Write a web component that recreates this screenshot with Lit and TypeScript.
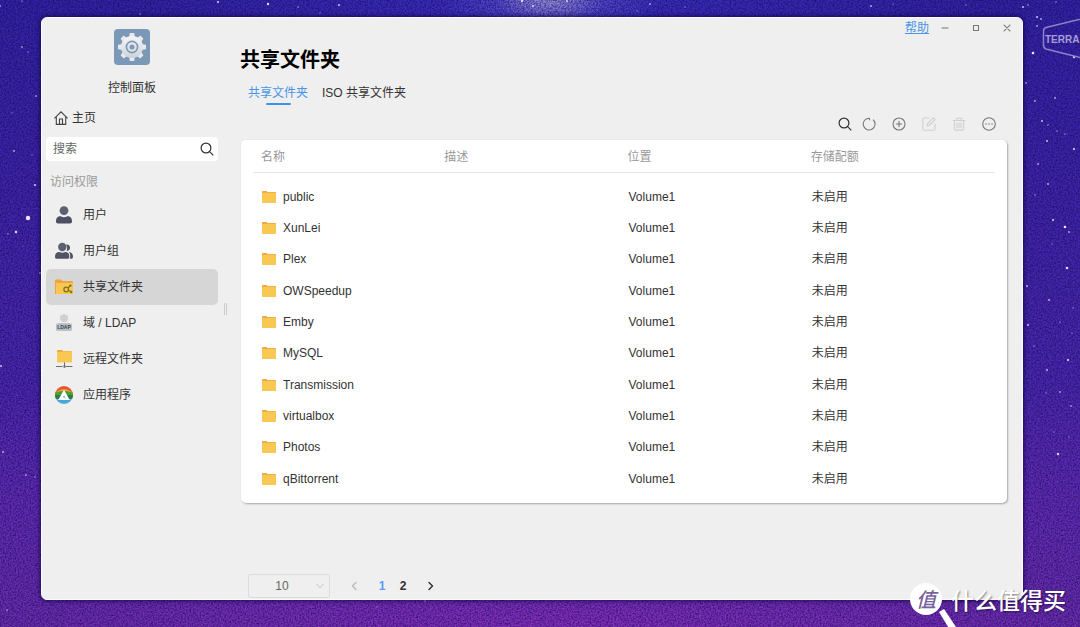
import { LitElement, html, css, svg, nothing } from "lit";
import { customElement, property, state } from "lit/decorators.js";
import { classMap } from "lit/directives/class-map.js";

const FONT = css`"Liberation Sans", "Noto Sans CJK SC", sans-serif`;

/* Star positions: x, y, radius, opacity */
const STARS: number[][] = [
  [28, 218, 2.2, 1], [16, 232, 1.3, 0.9], [35, 185, 1, 0.9], [14, 151, 0.9, 0.7], [22, 47, 0.9, 0.6],
  [28, 52, 0.8, 0.5], [36, 96, 1, 0.6], [12, 113, 0.7, 0.5], [32, 155, 0.7, 0.5], [8, 234, 0.8, 0.5],
  [40, 273, 1, 0.7], [1, 366, 1, 0.8], [3, 452, 1, 0.7], [26, 475, 0.9, 0.6], [35, 477, 0.8, 0.5],
  [7, 610, 0.9, 0.5], [17, 395, 0.6, 0.4], [23, 246, 0.7, 0.4], [22, 1, 0.8, 0.5], [0, 6, 0.9, 0.7],
  [140, 14, 0.8, 0.6], [218, 2, 1, 0.9], [268, 4, 1.2, 0.9], [298, 7, 0.8, 0.6], [339, 5, 1, 0.8],
  [320, 13, 0.8, 0.4], [522, 1, 1.2, 0.9], [533, 6, 1, 0.9], [567, 1, 1, 0.8], [650, 4, 0.9, 0.7],
  [637, 11, 0.8, 0.5], [685, 7, 0.8, 0.5], [871, 6, 1, 0.7], [893, 4, 0.7, 0.5], [966, 5, 0.8, 0.5],
  [1023, 7, 1, 0.8], [1028, 5, 0.8, 0.7], [1037, 17, 1.1, 0.8], [1041, 19, 0.9, 0.7], [1037, 26, 0.9, 0.7],
  [1033, 53, 1.3, 1], [1074, 57, 1.2, 0.9], [1056, 2, 0.8, 0.6], [1026, 83, 0.9, 0.7], [1035, 101, 0.9, 0.7],
  [1055, 98, 0.9, 0.7], [1042, 121, 1, 0.8], [1048, 125, 0.8, 0.6], [1047, 141, 1, 0.8], [1057, 131, 0.8, 0.6],
  [1065, 134, 0.8, 0.6], [1074, 149, 1.1, 0.9], [1038, 164, 0.9, 0.7], [1048, 184, 1, 0.7], [1035, 195, 0.8, 0.6],
  [1053, 220, 1, 0.9], [1065, 227, 1.3, 1], [1069, 232, 0.9, 0.7], [1052, 244, 0.7, 0.5], [1067, 268, 1.2, 1],
  [1027, 286, 1, 0.8], [1049, 300, 1, 0.7], [1028, 325, 1, 0.8], [1060, 322, 0.8, 0.5], [1034, 346, 0.8, 0.5],
  [1068, 360, 1.1, 0.9], [1047, 370, 1, 0.7], [1060, 392, 0.9, 0.7], [1046, 393, 0.7, 0.5], [1071, 406, 0.9, 0.6],
  [1054, 432, 0.8, 0.5], [1058, 454, 1.2, 0.9], [1069, 437, 0.7, 0.5], [1073, 308, 0.8, 0.5], [1072, 333, 0.8, 0.5],
  [425, 601, 0.8, 0.8], [377, 607, 0.8, 0.4], [700, 616, 0.8, 0.4],
];

const folder = svg`
  <svg width="14" height="12" viewBox="0 0 14 12" aria-hidden="true">
    <path d="M0 1a1 1 0 0 1 1-1h3.4l1.2 1.1H13a1 1 0 0 1 1 1V6H0z" fill="#efa53f"/>
    <rect y="1.8" width="14" height="10.2" rx="0.8" fill="#f9c852"/>
  </svg>`;

const search = svg`
  <svg width="14" height="14" viewBox="0 0 14 14" fill="none" stroke="#333" stroke-width="1.2" aria-hidden="true">
    <circle cx="6" cy="6" r="4.9"/><path d="M9.6 9.6l3.7 3.7"/>
  </svg>`;

const line = (body: unknown, color = "#777") => svg`
  <svg width="14" height="14" viewBox="0 0 14 14" fill="none" stroke=${color} stroke-width="1.1" stroke-linecap="round" stroke-linejoin="round" aria-hidden="true">${body}</svg>`;

const icons = {
  user: svg`<svg width="18" height="18" viewBox="0 0 18 18" fill="#5b6072" aria-hidden="true">
    <circle cx="9" cy="4.6" r="4.4"/><path fill="#4b5062" d="M1 15.6c0-3.8 1.6-5.4 4.6-5.4 1 .7 2.2 1 3.4 1s2.4-.3 3.4-1c3 0 4.6 1.6 4.6 5.4 0 1.3-.7 2-2 2H3c-1.3 0-2-.7-2-2z"/></svg>`,
  group: svg`<svg width="18" height="18" viewBox="0 0 18 18" fill="#4f5465" aria-hidden="true">
    <path d="M11 2.5a3.3 3.3 0 1 1 .5 6.5c1-1.6 1-4-.5-6.500z"/><path d="M14 10c2.800.4 4 2.200 4 4.800 0 1.300-.5 2-1.600 2h-1.600c.7-2 .4-5-.8-6.800z"/>
    <circle cx="7.3" cy="5" r="4.2" fill="#5b6072"/><path d="M0 15c0-3.400 1.400-5 4.300-5 1.900 1 4.100 1 6 0 2.900 0 4 1.600 4 5 0 1.200-.6 1.800-1.800 1.800H1.800C.6 16.800 0 16.200 0 15z"/></svg>`,
  share: svg`<svg width="18" height="18" viewBox="0 0 18 18" aria-hidden="true">
    <path d="M0 3a1.4 1.4 0 0 1 1.4-1.4h4.4L7.6 3h9A1.4 1.4 0 0 1 18 4.4V16H0z" fill="#f1a33c"/>
    <path d="M1 5h16.500l.5.6v9.800l-.6.6H1z" fill="#f9c650"/>
    <g fill="none" stroke="#7d7420" stroke-width="1.3"><circle cx="11.2" cy="11.5" r="2.3"/><path d="M13 10l2-2M13.500 12.300l2.300 1.500"/></g>
    <g fill="#7d7420"><circle cx="15.4" cy="7.6" r="1.2"/><circle cx="16.2" cy="14" r="1.2"/></g></svg>`,
  ldap: svg`<svg width="18" height="18" viewBox="0 0 18 18" aria-hidden="true">
    <circle cx="9" cy="4.3" r="4" fill="#cdd2d6"/><path d="M1 11c0-1.200 1.400-2 3.500-2h9c2.100 0 3.500.8 3.500 2v4.500c0 .9-.6 1.500-1.500 1.500h-13c-.9 0-1.500-.6-1.500-1.500z" fill="#b9c2c8"/>
    <text x="9" y="14.6" font-family="Liberation Sans" font-weight="700" font-size="5" text-anchor="middle" fill="#3c444b">LDAP</text></svg>`,
  remote: svg`<svg width="18" height="18" viewBox="0 0 18 18" aria-hidden="true">
    <path d="M2 1a1 1 0 0 1 1-1h4l1.200 1.200H16a1 1 0 0 1 1 1V6H2z" fill="#f1a33c"/><rect x="2" y="1.8" width="15" height="10.600" rx=".6" fill="#f9c852"/>
    <path d="M9.500 12.400V16M1 16.500h6.500M11 16.500h6.500" stroke="#6d6d6d" fill="none"/><path d="M8.500 15.200h2v2.600h-2z" fill="#6d6d6d"/></svg>`,
  apps: svg`<svg width="18" height="18" viewBox="0 0 18 18" aria-hidden="true">
    <clipPath id="disc"><circle cx="9" cy="9" r="9"/></clipPath>
    <g clip-path="url(#disc)"><path d="M0 0h18v7H0z" fill="#e4572e"/><path d="M0 7Q9-1 18 7v3H0z" fill="#f39a2e"/><path d="M0 6.500Q9 3.500 18 6.500V13H0z" fill="#4a9f3a"/><path d="M0 9h18v4H0z" fill="#2b7d46"/><path d="M0 12.500q9 3 18 0V18H0z" fill="#4ba6d8"/></g>
    <path d="M3.400 13.800L9 3.800l5.600 10h-3.400L9 9.600l-.9 1.600h1.500l1.400 2.600z" fill="#fff"/></svg>`,
};

@customElement("space-backdrop")
export class SpaceBackdrop extends LitElement {
  static styles = css`
    :host { position: absolute; inset: 0; overflow: hidden; background:
      radial-gradient(ellipse 110px 44px at 550px 0, rgba(165, 160, 225, .9), rgba(100, 90, 215, .5) 50%, transparent),
      radial-gradient(ellipse 420px 90px at 550px 0, rgba(70, 60, 225, .5), transparent),
      radial-gradient(ellipse 560px 90px at 560px 627px, rgba(160, 50, 205, .5), transparent),
      linear-gradient(#3423a8, #4125ad 30%, #4c28b2 60%, #642cb6 80%, #6c2dae); }
    .layer { position: absolute; inset: 0; width: 100%; height: 100%; }
    .brand { position: absolute; left: 1042px; top: 16px; }
  `;
  render() {
    return html`
      <svg class="layer" aria-hidden="true">
        <filter id="grain" x="0" y="0" width="100%" height="100%" color-interpolation-filters="sRGB">
          <feTurbulence type="fractalNoise" baseFrequency="0.6" numOctaves="2" seed="4"/>
          <feColorMatrix values="0 0 0 0 0.06  0 0 0 0 0.03  0 0 0 0 0.3  1.3 0 0 0 -0.42"/>
        </filter>
        <rect width="100%" height="100%" filter="url(#grain)"/>
        ${STARS.map(([x, y, r, o]) => svg`<circle cx=${x} cy=${y} r=${r} fill="#f3e4ff" opacity=${o}/>`)}
      </svg>
      <svg class="brand" width="38" height="46" viewBox="0 0 38 46" aria-hidden="true">
        <path d="M60 -2L4 11.5Q1.5 12.5 1.5 15V29Q1.5 32 4 33L60 47" fill="none" stroke="#8d82c8" stroke-width="1.5"/>
        <text x="3" y="27" font-family="Liberation Sans, sans-serif" font-weight="700" font-size="10" fill="#a79dd6">TERRA</text>
      </svg>`;
  }
}

@customElement("side-nav")
export class SideNav extends LitElement {
  @state() private active = "共享文件夹";
  private items: [string, unknown][] = [
    ["用户", icons.user], ["用户组", icons.group], ["共享文件夹", icons.share],
    ["域 / LDAP", icons.ldap], ["远程文件夹", icons.remote], ["应用程序", icons.apps],
  ];
  static styles = css`
    :host { display: flex; flex-direction: column; width: 172px; flex: none; padding: 11px 0 0 4px; font: 12px/16px ${FONT}; color: #333; }
    svg { display: block; flex: none; }
    button, input { font: inherit; color: inherit; border: 0; background: none; padding: 0; margin: 0; outline: none; }
    .app { display: flex; flex-direction: column; align-items: center; gap: 15px; }
    .home { display: flex; align-items: center; gap: 4px; height: 20px; padding: 0 8px; margin-top: 12px; color: inherit; text-decoration: none; }
    .search { display: flex; align-items: center; height: 24px; margin-top: 9px; padding: 0 4px 0 7px; background: #fff; border-radius: 4px; }
    .search input { flex: 1; min-width: 0; }
    .search input::placeholder { color: #666; opacity: 1; }
    h2 { margin: 13px 0 7px 4px; font-size: 12px; font-weight: 400; color: #999; }
    nav { display: flex; flex-direction: column; }
    .item { display: flex; align-items: center; gap: 10px; height: 36px; padding: 0 9px; border-radius: 5px; text-align: left; cursor: pointer; }
    .item.active { background: #d6d6d6; }
  `;
  render() {
    return html`
      <div class="app">
        <svg width="36" height="36" viewBox="0 0 36 36" aria-hidden="true">
          <defs><linearGradient id="metal" x1="0" y1="0" x2="0" y2="1"><stop offset="0" stop-color="#f4f5f7"/><stop offset="1" stop-color="#cfd3d9"/></linearGradient></defs>
          <rect width="36" height="36" rx="4" fill="#7b99b6"/>
          <g fill="#e6e8ec">
          ${[0, 45, 90, 135, 180, 225, 270, 315].map((a) => svg`<path d="M15 9L15.800 4h4.400l.8 5z" transform="rotate(${a} 18 18)"/>`)}<circle cx="18" cy="18" r="11" fill="url(#metal)"/></g>
          <circle cx="18" cy="18" r="5.600" fill="none" stroke="#7b99b6" stroke-width="1.600"/><circle cx="18" cy="18" r="2.500" fill="#7b99b6"/>
        </svg>
        <span>控制面板</span>
      </div>
      <a class="home" href="#">
        <svg width="14" height="14" viewBox="0 0 14 14" fill="none" stroke="#444" stroke-width="1.1" aria-hidden="true"><path d="M.4 7.300L7 .8l6.600 6.500M2.300 6v7.400h9.400V6M5.500 13.400V8h3v5.400"/></svg>
        <span>主页</span>
      </a>
      <label class="search"><input type="text" placeholder="搜索" aria-label="搜索" />${search}</label>
      <h2>访问权限</h2>
      <nav>
        ${this.items.map(([name, icon]) => html`
          <button class=${classMap({ item: true, active: name === this.active })} @click=${() => (this.active = name)}>${icon}<span>${name}</span></button>`)}
      </nav>`;
  }
}

@customElement("folder-table")
export class FolderTable extends LitElement {
  @property({ type: Array }) rows: string[] = [];
  static styles = css`
    :host { display: block; box-sizing: border-box; padding: 0 12px; min-height: 363px; background: #fff; border-radius: 5px; box-shadow: 1px 1px 2px rgba(0, 0, 0, .3); font: 12px/16px ${FONT}; color: #333; }
    table { width: 100%; border-collapse: separate; border-spacing: 0; table-layout: fixed; }
    th { box-sizing: border-box; width: 24.7%; height: 33px; padding: 1px 0 0 8px; border-bottom: 1px solid #e4e4e4; text-align: left; font-weight: 400; color: #999; }
    th:last-child { width: auto; }
    tbody::before { content: ""; display: block; height: 8px; }
    td { height: 31px; padding: 0 0 0 9px; }
    tr:nth-child(3n) td { height: 32px; }
    .name { display: flex; align-items: center; gap: 7px; }
    svg { display: block; }
  `;
  render() {
    return html`<table>
      <thead><tr><th>名称</th><th>描述</th><th>位置</th><th>存储配额</th></tr></thead>
      <tbody>${this.rows.map((r) => html`
        <tr><td><span class="name">${folder}${r}</span></td><td>${nothing}</td><td>Volume1</td><td>未启用</td></tr>`)}
      </tbody></table>`;
  }
}

@customElement("app-root")
export class AppRoot extends LitElement {
  @state() private tab = 0;
  @state() private page = 1;
  private folders = ["public", "XunLei", "Plex", "OWSpeedup", "Emby", "MySQL", "Transmission", "virtualbox", "Photos", "qBittorrent"];
  static styles = css`
    :host { display: flex; box-sizing: border-box; position: relative; min-height: 100vh; padding: 17px 57px 27px 41px; overflow: hidden; font: 12px/16px ${FONT}; color: #333; }
    svg { display: block; }
    button, select { font: inherit; color: inherit; border: 0; background: none; padding: 0; margin: 0; cursor: pointer; }
    .window { position: relative; flex: 1; min-width: 0; display: flex; background: #efefef; border: 1px solid #fbfbfb; border-radius: 6px; box-shadow: 0 0 4px 1px rgba(15, 5, 70, .8); }
    .splitter { width: 3px; height: 12px; margin: 0 0 0 6px; align-self: center; border: solid #ccc; border-width: 0 1px; box-sizing: border-box; }
    main { flex: 1; min-width: 0; display: flex; flex-direction: column; padding: 0 15px 1px 14px; }
    .titlebar { display: flex; justify-content: flex-end; align-items: center; height: 20px; margin-right: -8px; gap: 15px; }
    .titlebar button { width: 16px; height: 16px; display: grid; place-items: center; }
    .help { color: #4a94e8; margin-right: -7px; }
    h1 { margin: 8px 0 0 -1px; font-size: 20px; line-height: 28px; font-weight: 700; color: #000; }
    .tabs { display: flex; gap: 14px; margin: 9px 0 0 7px; }
    .tab { display: flex; flex-direction: column; align-items: center; line-height: 20px; }
    .tab::after { content: ""; width: 25px; height: 2px; border-radius: 1px; }
    .tab.on { color: #4a94e8; }
    .tab.on::after { background: #3d93ea; }
    .tools { display: flex; justify-content: flex-end; gap: 8px; margin: 11px 10px 8px 0; }
    .actions { display: flex; gap: 14px; }
    .tools button { width: 16px; height: 16px; display: grid; place-items: center; }
    .pager { display: flex; align-items: center; gap: 8px; margin: auto 0 0 7px; color: #333; }
    .size { display: grid; align-items: center; margin-right: 6px; }
    .size > * { grid-area: 1 / 1; }
    .size svg { justify-self: end; margin-right: 6px; pointer-events: none; }
    .size select { appearance: none; width: 82px; height: 24px; border: 1px solid #dcdde2; border-radius: 2px; padding: 0 26px 0 12px; text-align-last: center; color: #666; outline: none; }
    .pager button { width: 20px; height: 20px; display: grid; place-items: center; font-weight: 700; }
    .pages { display: flex; gap: 1px; }
    .pages .on { color: #5a9cf8; }
    .mark { position: absolute; right: 14px; bottom: 0; height: 44px; display: flex; gap: 9px; pointer-events: none; color: #fff; font: 500 23px/32px "Noto Sans CJK SC", sans-serif; text-shadow: 1px 1px 2px rgba(0, 0, 0, .45); white-space: nowrap; }
    .seal { width: 32px; height: 32px; border-radius: 50%; background: #fff; color: #77639c; font-size: 20px; line-height: 31px; text-align: center; text-shadow: none; font-style: italic; }
    .handle { position: absolute; left: 26px; top: 25px; }
  `;
  render() {
    const chevron = (d: string, c: string) => line(svg`<path d=${d} stroke-width="1.5"/>`, c);
    return html`
      <space-backdrop></space-backdrop>
      <div class="window">
        <side-nav></side-nav>
        <div class="splitter"></div>
        <main>
          <div class="titlebar">
            <a class="help" href="#">帮助</a>
            <button aria-label="最小化">${line(svg`<path d="M4 7h6"/>`)}</button>
            <button aria-label="最大化">${line(svg`<path d="M4.500 4.500h5v5h-5z"/>`)}</button>
            <button aria-label="关闭">${line(svg`<path d="M4 4l6 6M10 4l-6 6"/>`, "#888")}</button>
          </div>
          <h1>共享文件夹</h1>
          <div class="tabs">
            ${["共享文件夹", "ISO 共享文件夹"].map((t, i) => html`
              <button class=${classMap({ tab: true, on: this.tab === i })} @click=${() => (this.tab = i)}>${t}</button>`)}
          </div>
          <div class="tools">
            <button aria-label="搜索">${search}</button>
            <div class="actions">
              <button aria-label="刷新">${line(svg`<path d="M11.400 3A5.900 5.900 0 1 1 7.500 1.200v1.500"/>`)}</button>
              <button aria-label="新建">${line(svg`<circle cx="7" cy="7" r="6"/><path d="M7 4.200v5.600M4.200 7h5.600"/>`)}</button>
              <button aria-label="编辑">${line(svg`<path d="M7 1H2.200Q.8 1 .8 2.400v9.400Q.8 13.200 2.200 13.200h9.400q1.400 0 1.400-1.400V7"/><path d="M5 9l.5-2.300L11.400.9l1.700 1.700-5.900 5.900z"/>`, "#cfcfcc")}</button>
              <button aria-label="删除">${line(svg`<path d="M1 3.500h12M4.600 3.300V1.200h4.800v2.100M2.400 3.500v8.300q0 1.300 1.300 1.300h6.600q1.300 0 1.300-1.300V3.500M5 6v4.600M7 6v4.600M9 6v4.600"/>`, "#cfcfcc")}</button>
              <button aria-label="更多">${line(svg`<circle cx="7" cy="7" r="6.300"/><path d="M4 7h.1M7 7h.1M10 7h.1" stroke-width="1.400"/>`)}</button>
            </div>
          </div>
          <folder-table .rows=${this.folders}></folder-table>
          <div class="pager">
            <div class="size">
              <select aria-label="每页条数"><option>10</option><option>20</option><option>50</option></select>
              ${svg`<svg width="8" height="8" viewBox="0 0 8 8" fill="none" stroke="#c0c4cc" aria-hidden="true"><path d="M.5 2L4 5.800 7.500 2"/></svg>`}
            </div>
            <button aria-label="上一页" @click=${() => (this.page = 1)}>${chevron("M9 3.500L5.500 7 9 10.500", "#b8bcc4")}</button>
            <div class="pages">
              ${[1, 2].map((n) => html`<button class=${classMap({ on: this.page === n })} @click=${() => (this.page = n)}>${n}</button>`)}
            </div>
            <button aria-label="下一页" @click=${() => (this.page = 2)}>${chevron("M5 3.500L8.500 7 5 10.500", "#333")}</button>
          </div>
        </main>
      </div>
      <div class="mark">
        <span class="seal">值</span>
        <svg class="handle" width="22" height="22" viewBox="0 0 22 22" aria-hidden="true"><path d="M3 4L14 22h8L8 1z" fill="#fff"/></svg>
        <span>什么值得买</span>
      </div>`;
  }
}
